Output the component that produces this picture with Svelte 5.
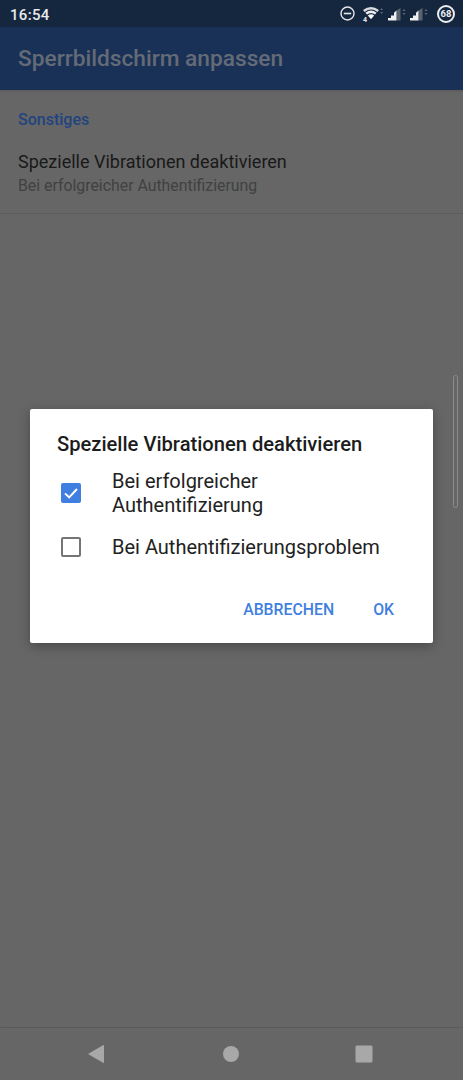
<script>
  let options = [
    { label: "Bei erfolgreicher Authentifizierung", checked: true },
    { label: "Bei Authentifizierungsproblem", checked: false }
  ];
</script>

<div class="screen">
  <div class="status">
    <span class="clock">16:54</span>
    <div class="status-icons">
      <svg class="dnd" viewBox="0 0 15 15" width="15" height="15">
        <circle cx="7.5" cy="7.5" r="6.5" fill="none" stroke="#e4e6e9" stroke-width="1.4" />
        <rect x="3.8" y="6.7" width="7.4" height="1.6" fill="#e4e6e9" />
      </svg>
      <svg class="wifi" viewBox="0 0 22 17" width="22" height="17">
        <path d="M1 5 Q9 -1.2 17 5 L15.4 6.9 Q9 2 2.6 6.9 Z" fill="#d8dbe0" />
        <path d="M3.4 7.8 Q9 3.4 14.6 7.8 L13 9.6 Q9 6.5 5 9.6 Z" fill="#eceef0" />
        <path d="M5.8 10.5 Q9 7.9 12.2 10.5 L9 14.2 Z" fill="#f6f7f8" />
        <text x="1" y="16.5" class="four">4</text>
        <path d="M19.6 3 L21 5 L18.2 5 Z M18.2 7 L21 7 L19.6 9 Z" fill="#5f6b7c" />
      </svg>
      <svg class="signal" viewBox="0 0 19 14" width="19" height="14">
        <path d="M9.5 13.5 V3.6 L13.5 1 V13.5 Z" fill="#59636f" />
        <path d="M1 13.5 V11 H4 V8.5 H7 V5.8 L9.5 3.6 V13.5 Z" fill="#eef0f2" />
        <path d="M17 2 L18.5 4 L15.5 4 Z M15.5 6 L18.5 6 L17 8 Z" fill="#5f6b7c" />
      </svg>
      <svg class="signal" viewBox="0 0 19 14" width="19" height="14">
        <path d="M9.5 13.5 V3.6 L13.5 1 V13.5 Z" fill="#59636f" />
        <path d="M1 13.5 V11 H4 V8.5 H7 V5.8 L9.5 3.6 V13.5 Z" fill="#eef0f2" />
        <path d="M17 2 L18.5 4 L15.5 4 Z M15.5 6 L18.5 6 L17 8 Z" fill="#5f6b7c" />
      </svg>
      <div class="battery"><span>68</span></div>
    </div>
  </div>

  <header class="appbar">Sperrbildschirm anpassen</header>

  <main class="content">
    <div class="section">Sonstiges</div>
    <div class="pref">
      <div class="pref-title">Spezielle Vibrationen deaktivieren</div>
      <div class="pref-sub">Bei erfolgreicher Authentifizierung</div>
    </div>
  </main>

  <div class="scrollbar"></div>

  <div class="dialog">
    <h2>Spezielle Vibrationen deaktivieren</h2>
    <ul>
      {#each options as opt}
        <li>
          <span class="box" class:checked={opt.checked}>
            {#if opt.checked}
              <svg viewBox="0 0 20 20" width="20" height="20">
                <path d="M4 10.4 L8.2 14.4 L16 6" fill="none" stroke="#fff" stroke-width="2" />
              </svg>
            {/if}
          </span>
          <span class="opt-label">{opt.label}</span>
        </li>
      {/each}
    </ul>
    <div class="actions">
      <span>ABBRECHEN</span>
      <span>OK</span>
    </div>
  </div>

  <nav class="navbar">
    <svg viewBox="0 0 18 20" width="18" height="20">
      <path d="M1 10 L16.4 1 Q17 0.8 17 1.6 L17 18.4 Q17 19.2 16.4 19 Z" fill="#a8a8a8" />
    </svg>
    <svg class="home" viewBox="0 0 18 18" width="18" height="18">
      <circle cx="9" cy="9" r="8" fill="#a8a8a8" />
    </svg>
    <svg viewBox="0 0 18 18" width="18" height="18">
      <rect x="0.5" y="0.5" width="17" height="17" rx="1.5" fill="#a8a8a8" />
    </svg>
  </nav>
</div>

<style>
  :global(body) {
    margin: 0;
    background: #666;
  }

  .screen {
    position: relative;
    width: 463px;
    height: 1080px;
    display: flex;
    flex-direction: column;
    overflow: hidden;
    background: #666;
    font-family: Roboto, "Liberation Sans", sans-serif;
  }

  .status {
    height: 27px;
    flex: none;
    display: flex;
    align-items: center;
    justify-content: space-between;
    padding: 0 8px 0 10px;
    background: #15273f;
  }

  .clock {
    color: #e8eaec;
    font-size: 15px;
    font-weight: 500;
    letter-spacing: 0.3px;
    position: relative;
    top: 1px;
  }

  .status-icons {
    display: flex;
    align-items: center;
  }

  .dnd {
    margin-right: 7px;
  }

  .signal {
    margin-left: 3px;
  }

  .four {
    font-size: 7px;
    font-weight: 700;
    fill: #e4e6e9;
  }

  .battery {
    width: 18px;
    height: 18px;
    margin-left: 9px;
    box-sizing: border-box;
    border: 2px solid #eceef0;
    border-radius: 50%;
    display: flex;
    align-items: center;
    justify-content: center;
    color: #eceef0;
    font-size: 9.5px;
    font-weight: 700;
  }

  .appbar {
    height: 63px;
    flex: none;
    box-sizing: border-box;
    padding: 0 18px;
    display: flex;
    align-items: center;
    background: #1a3157;
    color: #646b76;
    font-size: 22.7px;
    font-weight: 500;
  }

  .content {
    flex: 1;
    box-shadow: inset 0 2px 2px -1px rgba(0, 0, 0, 0.12);
  }

  .section {
    padding: 21px 18px 0;
    height: 35px;
    line-height: 18px;
    color: #214480;
    font-size: 16px;
    font-weight: 500;
  }

  .pref {
    padding: 4px 18px 16px;
    border-bottom: 1px solid #5c5c5c;
    height: 47px;
  }

  .pref-title {
    color: #191919;
    font-size: 18px;
    line-height: 24px;
  }

  .pref-sub {
    color: #414141;
    font-size: 15.85px;
    line-height: 24px;
  }

  .scrollbar {
    position: absolute;
    left: 453px;
    top: 375px;
    width: 3px;
    height: 131px;
    border: 1px solid #8c8c8c;
    border-radius: 3px;
    background: #666;
  }

  .dialog {
    position: absolute;
    left: 30px;
    top: 409px;
    width: 403px;
    height: 234px;
    box-sizing: border-box;
    padding: 23px 27px 0;
    background: #fff;
    border-radius: 2px;
    box-shadow: 0 3px 12px rgba(0, 0, 0, 0.3);
    display: flex;
    flex-direction: column;
  }

  h2 {
    margin: 0;
    color: #1c1c1c;
    font-size: 20.15px;
    line-height: 24px;
    font-weight: 500;
  }

  ul {
    list-style: none;
    margin: 13px 0 0;
    padding: 0;
  }

  li {
    display: flex;
    align-items: center;
    gap: 31px;
    padding-left: 4px;
    margin-bottom: 18px;
    color: #222;
    font-size: 20px;
    line-height: 24px;
  }

  .box {
    flex: none;
    width: 20px;
    height: 20px;
    box-sizing: border-box;
    border: 2px solid #757575;
    border-radius: 2px;
  }

  .box.checked {
    border: 0;
    background: #3f7fdf;
  }

  .box svg {
    display: block;
  }

  .opt-label {
    width: 270px;
  }

  .actions {
    display: flex;
    justify-content: flex-end;
    gap: 39px;
    padding: 23px 12px 0 0;
    color: #3f7fdf;
    font-size: 15.8px;
    font-weight: 500;
    line-height: 20px;
  }

  .navbar {
    height: 51px;
    flex: none;
    border-top: 1px solid #5a5a5a;
    display: flex;
    align-items: center;
    justify-content: center;
    gap: 116px;
    padding: 0 3px 1px 0;
  }

  .home {
    margin: 0 -1px 0 1px;
  }
</style>
